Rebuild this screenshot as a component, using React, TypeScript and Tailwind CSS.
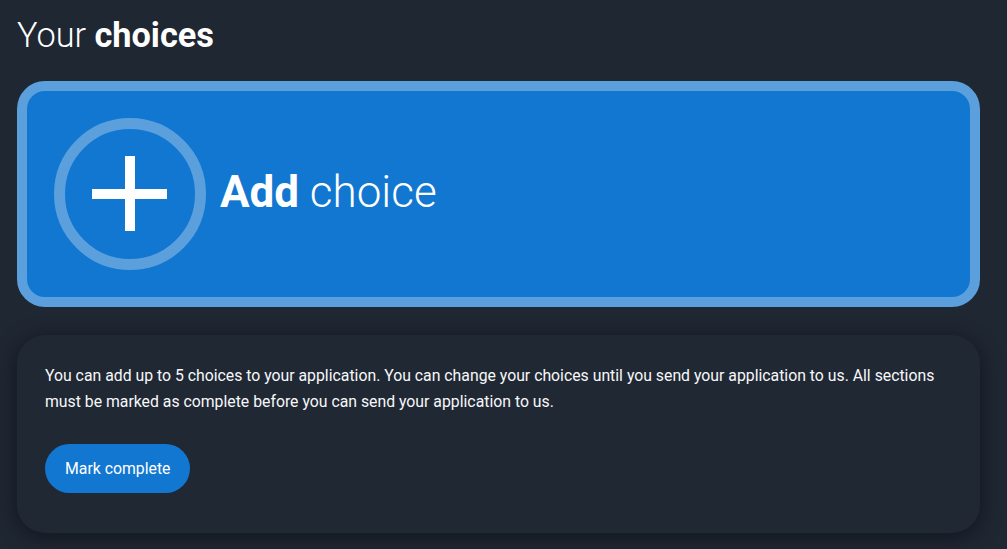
export default function App() {
  return (
    <div
      className="min-h-[549px] bg-[#1f2733] pl-[17px] pr-[27px] pt-[11px] pb-4 text-white"
      style={{ fontFamily: "Roboto, 'Liberation Sans', sans-serif" }}
    >
      <h1 className="text-[34.3px] leading-[48px] font-light">
        Your <span className="font-bold">choices</span>
      </h1>

      <button
        type="button"
        className="mt-[22px] flex w-full items-center gap-[14px] rounded-[28px] border-[10px] border-[#5ba0dc] bg-[#1177d1] p-[27px] text-left"
      >
        <svg width="152" height="152" viewBox="0 0 152 152" className="shrink-0">
          <circle cx="76" cy="76" r="70.5" fill="none" stroke="#5ba0dc" strokeWidth="11" />
          <rect x="71" y="38" width="10" height="75" fill="#fff" />
          <rect x="38" y="71" width="75" height="10" fill="#fff" />
        </svg>
        <span className="-mt-[4px] text-[44px] leading-none font-light">
          <span className="font-bold">Add</span> choice
        </span>
      </button>

      <div className="mt-[28px] rounded-[28px] bg-[#202834] px-[28px] pt-[28px] pb-[40px] shadow-[0_4px_22px_rgba(0,0,0,0.45)]">
        <p className="text-[15.8px] leading-[26px] text-[#f7f8fa]">
          You can add up to 5 choices to your application. You can change your choices until you send your
          application to us. All sections must be marked as complete before you can send your application to us.
        </p>
        <button
          type="button"
          className="mt-[29px] h-[49px] rounded-full bg-[#1177d1] px-[20px] text-[15.8px] text-white"
        >
          Mark complete
        </button>
      </div>
    </div>
  );
}
